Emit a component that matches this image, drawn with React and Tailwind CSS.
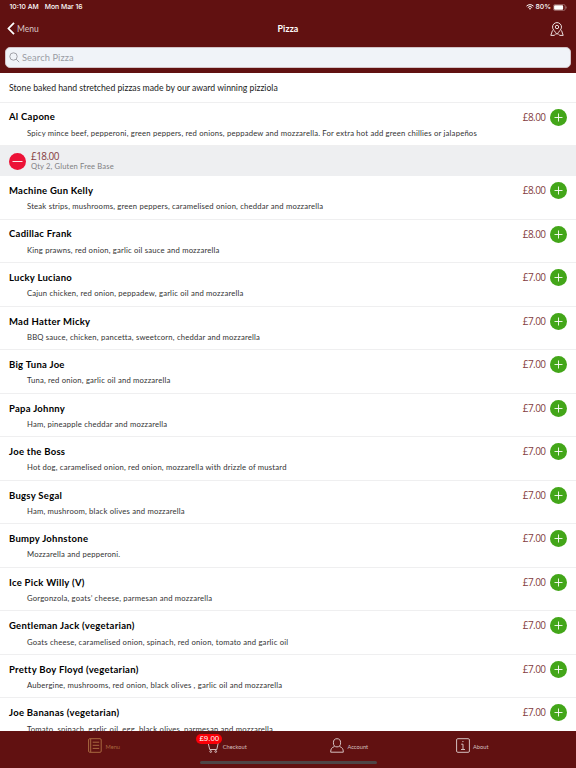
import React from 'react';

const cartLine = { price: '£18.00', note: 'Qty 2, Gluten Free Base' };

const pizzas = [
  { name: 'Al Capone', price: '£8.00', cart: cartLine, description: 'Spicy mince beef, pepperoni, green peppers, red onions, peppadew and mozzarella. For extra hot add green chillies or jalapeños' },
  { name: 'Machine Gun Kelly', price: '£8.00', description: 'Steak strips, mushrooms, green peppers, caramelised onion, cheddar and mozzarella' },
  { name: 'Cadillac Frank', price: '£8.00', description: 'King prawns, red onion, garlic oil sauce and mozzarella' },
  { name: 'Lucky Luciano', price: '£7.00', description: 'Cajun chicken, red onion, peppadew, garlic oil and mozzarella' },
  { name: 'Mad Hatter Micky', price: '£7.00', description: 'BBQ sauce, chicken, pancetta, sweetcorn, cheddar and mozzarella' },
  { name: 'Big Tuna Joe', price: '£7.00', description: 'Tuna, red onion, garlic oil and mozzarella' },
  { name: 'Papa Johnny', price: '£7.00', description: 'Ham, pineapple cheddar and mozzarella' },
  { name: 'Joe the Boss', price: '£7.00', description: 'Hot dog, caramelised onion, red onion, mozzarella with drizzle of mustard' },
  { name: 'Bugsy Segal', price: '£7.00', description: 'Ham, mushroom, black olives and mozzarella' },
  { name: 'Bumpy Johnstone', price: '£7.00', description: 'Mozzarella and pepperoni.' },
  { name: 'Ice Pick Willy (V)', price: '£7.00', description: 'Gorgonzola, goats’ cheese, parmesan and mozzarella' },
  { name: 'Gentleman Jack (vegetarian)', price: '£7.00', description: 'Goats cheese, caramelised onion, spinach, red onion, tomato and garlic oil' },
  { name: 'Pretty Boy Floyd (vegetarian)', price: '£7.00', description: 'Aubergine, mushrooms, red onion, black olives , garlic oil and mozzarella' },
  { name: 'Joe Bananas (vegetarian)', price: '£7.00', description: 'Tomato, spinach, garlic oil, egg, black olives, parmesan and mozzarella' },
];

function StatusBar() {
  return (
    <div className="flex h-[14px] items-center justify-between pl-[9.5px] pr-[9px] font-['Inter',sans-serif] text-[6.8px] font-medium leading-none text-white">
      <div className="flex gap-[6px]">
        <span>10:10 AM</span>
        <span>Mon Mar 16</span>
      </div>
      <div className="flex items-center gap-[2px]">
        <svg width="8" height="6" viewBox="0 0 16 12" fill="none" stroke="currentColor" strokeWidth="2">
          <path d="M1 4.2a10 10 0 0 1 14 0M3.6 7a6.3 6.3 0 0 1 8.8 0" />
          <path d="M8 11.5 5.7 9a3.3 3.3 0 0 1 4.6 0z" fill="currentColor" stroke="none" />
        </svg>
        <span>80%</span>
        <svg width="14" height="7" viewBox="0 0 14 7" fill="none">
          <rect x="0.4" y="0.5" width="11.8" height="6" rx="1.6" stroke="#b58c8c" strokeWidth="0.6" />
          <rect x="1.1" y="1.2" width="9" height="4.6" rx="0.8" fill="#fff" />
          <path d="M13.1 2.5v2" stroke="#b58c8c" strokeWidth="0.8" />
        </svg>
      </div>
    </div>
  );
}

function Header() {
  return (
    <header className="h-[73px] shrink-0 bg-[#611111]">
      <StatusBar />
      <div className="grid h-[33px] grid-cols-3 items-center px-[7px] pb-[4px]">
        <button className="flex items-center gap-[2px] text-[8.5px] text-[#d9c7c7]">
          <svg width="8" height="13" viewBox="0 0 8 13" fill="none" stroke="#fff" strokeWidth="1.8">
            <path d="M7 0.8 1.5 6.5 7 12.2" />
          </svg>
          <span className="pt-[1px]">Menu</span>
        </button>
        <h1 className="text-center text-[8.9px] font-bold tracking-[0.1px] text-white">Pizza</h1>
        <svg className="mr-[5px] justify-self-end" width="14" height="14" viewBox="0 0 14 14" fill="none" stroke="#eadede" strokeWidth="1">
          <path d="M7 12.4C5.2 9.4 2.5 7.6 2.5 5.1a4.5 4.5 0 0 1 9 0C11.5 7.6 8.8 9.4 7 12.4z" />
          <circle cx="7" cy="5" r="1.7" />
          <path d="M2.5 8.4.8 13.4h3.4l1.5-1.4M11.5 8.4l1.7 5H9.8l-1.5-1.4" />
        </svg>
      </div>
      <div className="mx-[5px] flex h-[21px] items-center gap-[2px] rounded-[5px] border border-[#d3c4c8] bg-[#f0f3f8] pl-[3px] text-[9.3px] tracking-[0.1px] text-[#9a9da4]">
        <svg width="11" height="11" viewBox="0 0 11 11" fill="none" stroke="#8d8d94" strokeWidth="0.8">
          <circle cx="4.5" cy="4.5" r="3.7" />
          <path d="m7.2 7.2 3 3" />
        </svg>
        Search Pizza
      </div>
    </header>
  );
}

function RoundButton({ color, children }) {
  return (
    <button className={`flex size-[17px] shrink-0 items-center justify-center rounded-full ${color}`}>
      <svg width="17" height="17" viewBox="0 0 17 17" fill="none" stroke="#fff" strokeWidth="0.9">
        {children}
      </svg>
    </button>
  );
}

function PizzaRow({ pizza }) {
  return (
    <>
      <div className="h-[43.54px] shrink-0 border-b border-[#efeff0] px-[9px] pt-[6px]">
        <div className="flex h-[17px] items-center">
          <h2 className="flex-1 pt-[1px] text-[9.5px] font-bold tracking-[0.27px] text-black">{pizza.name}</h2>
          <span className="mr-[4.5px] font-['Open_Sans',sans-serif] text-[10px] tracking-[-0.55px] text-[#843c40]">{pizza.price}</span>
          <RoundButton color="bg-[#43a619]">
            <path d="M8.5 4.5v8M4.5 8.5h8" />
          </RoundButton>
        </div>
        <p className="mt-[2.2px] whitespace-nowrap pl-[18px] text-[7.7px] leading-[10px] tracking-[0.19px] text-[#333]">{pizza.description}</p>
      </div>
      {pizza.cart && (
        <div className="flex h-[30px] shrink-0 items-center gap-[5px] bg-[#eeeff1] px-[9px]">
          <RoundButton color="bg-[#ec1237]">
            <path d="M3.5 8.5h10" />
          </RoundButton>
          <div>
            <div className="font-['Open_Sans',sans-serif] text-[10px] leading-[11px] tracking-[-0.55px] text-[#843c40]">{pizza.cart.price}</div>
            <div className="text-[7.6px] leading-[9px] tracking-[0.15px] text-[#808083]">{pizza.cart.note}</div>
          </div>
        </div>
      )}
    </>
  );
}

function Tab({ label, className = 'text-[#d5c0c0]', badge, children }) {
  return (
    <button className={`relative flex items-center gap-[3.5px] text-[5.7px] ${className}`}>
      <svg width="14" height="15" viewBox="0 0 14 15" fill="none" stroke="currentColor" strokeWidth="1">
        {children}
      </svg>
      <span className="pt-[3px]">{label}</span>
      {badge && (
        <span className="absolute -left-[9px] top-[2.5px] flex h-[10.5px] w-[26px] items-center justify-center rounded-full bg-[#fb0007] font-['Liberation_Sans',sans-serif] text-[7.9px] text-white">
          {badge}
        </span>
      )}
    </button>
  );
}

function TabBar() {
  return (
    <footer className="flex h-[37px] shrink-0 flex-col items-center bg-[#611111]">
      <nav className="flex h-[29.5px] w-full justify-center">
        <div className="flex w-[122px] justify-center">
          <Tab label="Menu" className="text-[#a86940]">
            <rect x="0.6" y="0.7" width="12.6" height="13.6" rx="1.2" />
            <path d="M2.7 1v13M4.7 4.2h6.5M4.7 7.3h6.5M4.7 10.4h6.5" />
          </Tab>
        </div>
        <div className="flex w-[122px] justify-center">
          <Tab label="Checkout" badge="£9.00">
            <path d="M1 3h1.7l2 8.5h7.1L13.2 5H3.2" />
            <circle cx="5.7" cy="13.5" r="0.9" />
            <circle cx="10.7" cy="13.5" r="0.9" />
          </Tab>
        </div>
        <div className="flex w-[124px] justify-center">
          <Tab label="Account">
            <ellipse cx="7" cy="4.8" rx="3.6" ry="4.1" />
            <path d="M4.500 8.500C1.800 9.600.7 10.500.7 14.200h12.600c0-3.700-1.100-4.600-3.800-5.700" />
          </Tab>
        </div>
        <div className="flex w-[122px] justify-center">
          <Tab label="About">
            <rect x="0.6" y="0.7" width="12.8" height="13.6" rx="1.2" />
            <path d="M5.2 6.2H7v5.3M5 11.5h4M6.3 3.6h1.2" />
          </Tab>
        </div>
      </nav>
      <div className="h-[3px] w-[177px] rounded-full bg-[#4d4546]" />
    </footer>
  );
}

export default function App() {
  return (
    <div className="flex h-[768px] w-[576px] flex-col overflow-hidden bg-white font-['Lato',sans-serif]">
      <Header />
      <main className="flex min-h-0 flex-1 flex-col overflow-hidden">
        <p className="flex h-[29.5px] shrink-0 items-center border-b border-[#efeff0] px-[9px] pt-[1px] text-[8.7px] text-[#1c1c1c]">
          Stone baked hand stretched pizzas made by our award winning pizziola
        </p>
        {pizzas.map((pizza) => (
          <PizzaRow key={pizza.name} pizza={pizza} />
        ))}
      </main>
      <TabBar />
    </div>
  );
}
